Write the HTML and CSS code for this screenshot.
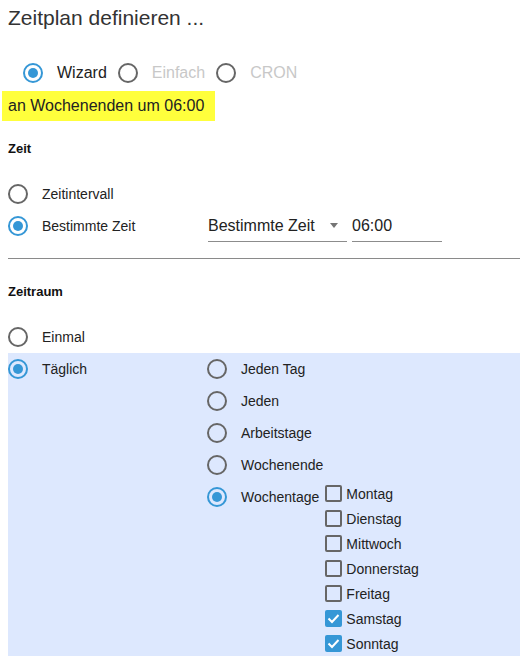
FILE: index.html
```html
<!DOCTYPE html>
<html lang="de">
<head>
<meta charset="utf-8">
<title>Zeitplan definieren</title>
<link rel="stylesheet" href="styles.css">
</head>
<body>
<div class="page">
  <h1 class="title">Zeitplan definieren ...</h1>

  <div class="modes">
    <div class="mode"><span class="radio on"></span><span class="mode-text">Wizard</span></div>
    <div class="mode disabled"><span class="radio"></span><span class="mode-text">Einfach</span></div>
    <div class="mode disabled"><span class="radio"></span><span class="mode-text">CRON</span></div>
  </div>

  <div class="summary">an Wochenenden um 06:00</div>

  <h2 class="section section-zeit">Zeit</h2>
  <div class="rows rows-zeit">
    <div class="opt-row">
      <div class="opt"><span class="radio"></span><span class="lbl">Zeitintervall</span></div>
    </div>
    <div class="opt-row">
      <div class="opt left"><span class="radio on"></span><span class="lbl">Bestimmte Zeit</span></div>
      <div class="select"><span class="select-text">Bestimmte Zeit</span><span class="arrow"></span></div>
      <div class="time">06:00</div>
    </div>
  </div>

  <hr class="divider">

  <h2 class="section section-raum">Zeitraum</h2>
  <div class="rows rows-raum">
    <div class="opt-row">
      <div class="opt"><span class="radio"></span><span class="lbl">Einmal</span></div>
    </div>
    <div class="daily">
      <div class="opt left daily-left"><span class="radio on"></span><span class="lbl">Täglich</span></div>
      <div class="suboptions">
        <div class="opt-row"><div class="opt"><span class="radio"></span><span class="lbl">Jeden Tag</span></div></div>
        <div class="opt-row"><div class="opt"><span class="radio"></span><span class="lbl">Jeden</span></div></div>
        <div class="opt-row"><div class="opt"><span class="radio"></span><span class="lbl">Arbeitstage</span></div></div>
        <div class="opt-row"><div class="opt"><span class="radio"></span><span class="lbl">Wochenende</span></div></div>
        <div class="week">
          <div class="opt week-opt"><span class="radio on"></span><span class="lbl">Wochentage</span></div>
          <div class="days">
            <div class="day"><span class="box"></span><span class="day-lbl">Montag</span></div>
            <div class="day"><span class="box"></span><span class="day-lbl">Dienstag</span></div>
            <div class="day"><span class="box"></span><span class="day-lbl">Mittwoch</span></div>
            <div class="day"><span class="box"></span><span class="day-lbl">Donnerstag</span></div>
            <div class="day"><span class="box"></span><span class="day-lbl">Freitag</span></div>
            <div class="day"><span class="box checked"><svg viewBox="0 0 17 17" width="17" height="17"><polyline points="3.5,8.5 7,12 13.5,5" fill="none" stroke="#fff" stroke-width="2"/></svg></span><span class="day-lbl">Samstag</span></div>
            <div class="day"><span class="box checked"><svg viewBox="0 0 17 17" width="17" height="17"><polyline points="3.5,8.5 7,12 13.5,5" fill="none" stroke="#fff" stroke-width="2"/></svg></span><span class="day-lbl">Sonntag</span></div>
          </div>
        </div>
      </div>
    </div>
  </div>
</div>
</body>
</html>
```

FILE: styles.css
```css
* { box-sizing: border-box; }

html, body {
  margin: 0;
  padding: 0;
  background: #fff;
  overflow: hidden;
}

body {
  font-family: "Liberation Sans", Arial, sans-serif;
  color: #222;
}

.page {
  margin-left: 8px;
  height: 656px;
  display: flex;
  flex-direction: column;
}

.title {
  margin: 0;
  padding-top: 6px;
  font-size: 21px;
  font-weight: normal;
  line-height: 24px;
  color: #333;
}

.modes {
  margin-top: 33px;
  height: 22px;
  padding-left: 15px;
  display: flex;
  align-items: center;
}

.mode {
  display: flex;
  align-items: center;
  gap: 14px;
  margin-right: 11px;
  font-size: 16px;
  color: #222;
}

.mode.disabled .mode-text {
  color: #c8c8c8;
}

.summary {
  margin-top: 8px;
  margin-left: -6px;
  padding-left: 6px;
  width: 213px;
  height: 30px;
  line-height: 30px;
  font-size: 16px;
  background: #ffff3c;
  color: #222;
}

.section {
  margin: 0;
  font-size: 13px;
  font-weight: bold;
  line-height: 20px;
  color: #111;
}

.section-zeit { margin-top: 18px; }
.section-raum { margin-top: 23px; }

.rows-zeit { margin-top: 19px; }
.rows-raum { margin-top: 19px; flex: 1; display: flex; flex-direction: column; }

.radio {
  flex: none;
  width: 20px;
  height: 20px;
  border: 2px solid #666;
  border-radius: 50%;
  display: flex;
  align-items: center;
  justify-content: center;
  background: transparent;
}

.radio.on {
  border-color: #3597d6;
}

.radio.on::after {
  content: "";
  width: 10px;
  height: 10px;
  border-radius: 50%;
  background: #3597d6;
}

.opt-row {
  height: 32px;
  display: flex;
  align-items: center;
}

.opt {
  display: flex;
  align-items: center;
  gap: 14px;
  font-size: 14px;
}

.opt.left {
  width: 199px;
}

.lbl {
  line-height: 32px;
}

.select {
  margin-left: 1px;
  width: 139px;
  height: 32px;
  border-bottom: 1px solid #8c8c8c;
  display: flex;
  align-items: center;
  font-size: 16px;
}

.select-text {
  line-height: 31px;
}

.arrow {
  margin-left: auto;
  margin-right: 9px;
  width: 0;
  height: 0;
  border-left: 4px solid transparent;
  border-right: 4px solid transparent;
  border-top: 5px solid #757575;
}

.time {
  margin-left: 5px;
  width: 90px;
  height: 32px;
  line-height: 31px;
  border-bottom: 1px solid #8c8c8c;
  font-size: 16px;
}

.divider {
  margin: 16px 0 0 0;
  height: 0;
  border: 0;
  border-top: 1px solid #8a8a8a;
}

.daily {
  flex: 1;
  display: flex;
  align-items: flex-start;
  background: #dde8fe;
}

.daily-left {
  height: 32px;
}

.suboptions {
  display: flex;
  flex-direction: column;
}

.week {
  display: flex;
  align-items: flex-start;
}

.week-opt {
  height: 32px;
}

.days {
  margin-left: 6px;
  display: flex;
  flex-direction: column;
}

.day {
  height: 25px;
  display: flex;
  align-items: center;
  gap: 4px;
  font-size: 14px;
}

.box {
  flex: none;
  width: 17px;
  height: 17px;
  border: 2px solid #666;
  border-radius: 2px;
  display: flex;
  align-items: center;
  justify-content: center;
}

.box.checked {
  border: 0;
  background: #3597d6;
}

.box svg {
  display: block;
}
```
